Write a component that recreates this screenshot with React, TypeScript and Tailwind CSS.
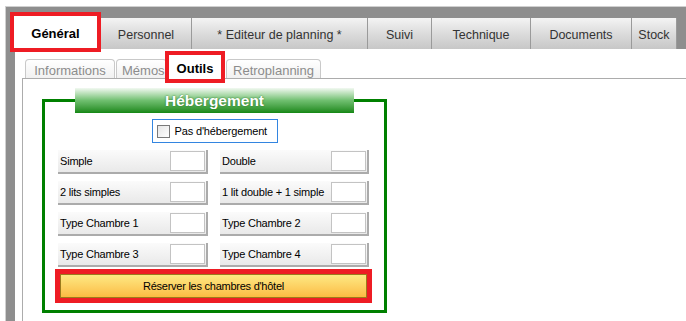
import React from 'react';

const mainTabs = [
  { label: 'Personnel', w: 'w-[91px]' },
  { label: '* Editeur de planning *', w: 'w-[176px]' },
  { label: 'Suivi', w: 'w-[64px]' },
  { label: 'Technique', w: 'w-[99px]' },
  { label: 'Documents', w: 'w-[101px]' },
  { label: 'Stock', w: 'w-[45px]' },
];

const rooms = [
  'Simple',
  'Double',
  '2 lits simples',
  '1 lit double + 1 simple',
  'Type Chambre 1',
  'Type Chambre 2',
  'Type Chambre 3',
  'Type Chambre 4',
];

const RoomCell: React.FC<{ label: string }> = ({ label }) => (
  <div className="flex h-[24px] items-center justify-between border-r-2 border-b-2 border-[#ababab] bg-gradient-to-b from-[#fbfbfb] to-[#e9e9e9] pl-[2px] pr-[1px]">
    <span className="pt-[1px] text-[11px] tracking-[-0.2px] text-black">{label}</span>
    <div className="h-[20px] w-[35px] border border-[#c3c3c3] bg-white" />
  </div>
);

export default function App() {
  return (
    <div className="h-[321px] w-[686px] overflow-hidden bg-white font-['Liberation_Sans',Arial,sans-serif]">
      <div className="ml-[5px] mt-[6px] flex h-[315px] flex-col border-l border-t border-[#d0d0d0] bg-[#8e8e8e] pl-[9px] pt-[11px]">
        {/* main tabs */}
        <div className="flex h-[31px] shrink-0">
          <div className="relative z-10 -ml-[5px] -mt-[6px] flex h-[40px] w-[91px] shrink-0 items-center justify-center border-4 border-[#ee1c24] bg-white pt-[3px] text-[13px] font-bold text-black">
            Général
          </div>
          {mainTabs.map((t) => (
            <div
              key={t.label}
              className={`${t.w} flex h-[31px] shrink-0 items-center justify-center border-r border-[#9a9a9a] bg-gradient-to-b from-[#f4f4f4] via-[#dcdcdc] to-[#c7c7c7] pt-[3px] text-[12.5px] text-[#333]`}
            >
              {t.label}
            </div>
          ))}
        </div>

        {/* content */}
        <div className="flex flex-1 flex-col bg-white pl-[7px] pt-[10px]">
          <div className="flex h-[19px] shrink-0 items-end pl-[3px]">
            <div className="flex h-[19px] w-[90px] items-center justify-center rounded-t-[4px] border border-b-0 border-[#c9c9c9] bg-gradient-to-b from-white to-[#f1f1f1] pt-[3px] text-[13px] text-[#8c8c8c]">
              Informations
            </div>
            <div className="ml-[1px] flex h-[19px] w-[51px] items-center justify-start rounded-t-[4px] border border-b-0 border-[#c9c9c9] bg-gradient-to-b from-white to-[#f1f1f1] pl-[5px] pt-[3px] text-[13px] text-[#8c8c8c]">
              Mémos
            </div>
            <div className="relative z-10 -mb-[5px] -ml-[2px] flex h-[32px] w-[60px] items-center justify-center border-4 border-[#ee1c24] bg-white pt-[3px] text-[13px] font-bold text-black">
              Outils
            </div>
            <div className="ml-[1px] flex h-[19px] w-[95px] items-center justify-center rounded-t-[4px] border border-b-0 border-[#c9c9c9] bg-gradient-to-b from-white to-[#f1f1f1] pt-[3px] text-[13px] text-[#8c8c8c]">
              Retroplanning
            </div>
          </div>

          <div className="flex-1 border-l border-t border-[#acacac] pl-[19px] pt-[20px]">
            <div className="flex h-[214px] w-[345px] flex-col border-[3px] border-[#008000] pb-[7px]">
              <div className="mx-auto -mt-[14px] flex h-[25px] w-[279px] items-center justify-center bg-gradient-to-b from-[#f2f9f2] via-[#6fbf6f] to-[#128812] pt-[1px] text-[15.5px] font-bold text-white [text-shadow:0_0_2px_#1f6e1f]">
                Hébergement
              </div>

              <div className="mx-auto mt-[6px] flex h-[24px] w-[126px] items-center border border-[#3385e0] bg-white pl-[4px]">
                <div className="h-[13px] w-[13px] border border-[#7a7a7a] bg-gradient-to-br from-[#e6e6e6] to-white" />
                <span className="ml-[5px] text-[11px] tracking-[-0.15px] text-black">Pas d'hébergement</span>
              </div>

              <div className="mt-[7px] grid grid-cols-[150px_149px] gap-x-[12px] gap-y-[7px] pl-[13px]">
                {rooms.map((r) => (
                  <RoomCell key={r} label={r} />
                ))}
              </div>

              <div className="ml-[10px] mt-[2px] h-[34px] w-[317px] border-[5px] border-[#ee1c24]">
                <div className="flex h-full w-full items-center justify-center border border-[#9c7a1c] bg-gradient-to-b from-[#fde982] to-[#fbbb42] text-[11px] tracking-[-0.25px] text-black">
                  Réserver les chambres d'hôtel
                </div>
              </div>
            </div>
          </div>
        </div>
      </div>
    </div>
  );
}
